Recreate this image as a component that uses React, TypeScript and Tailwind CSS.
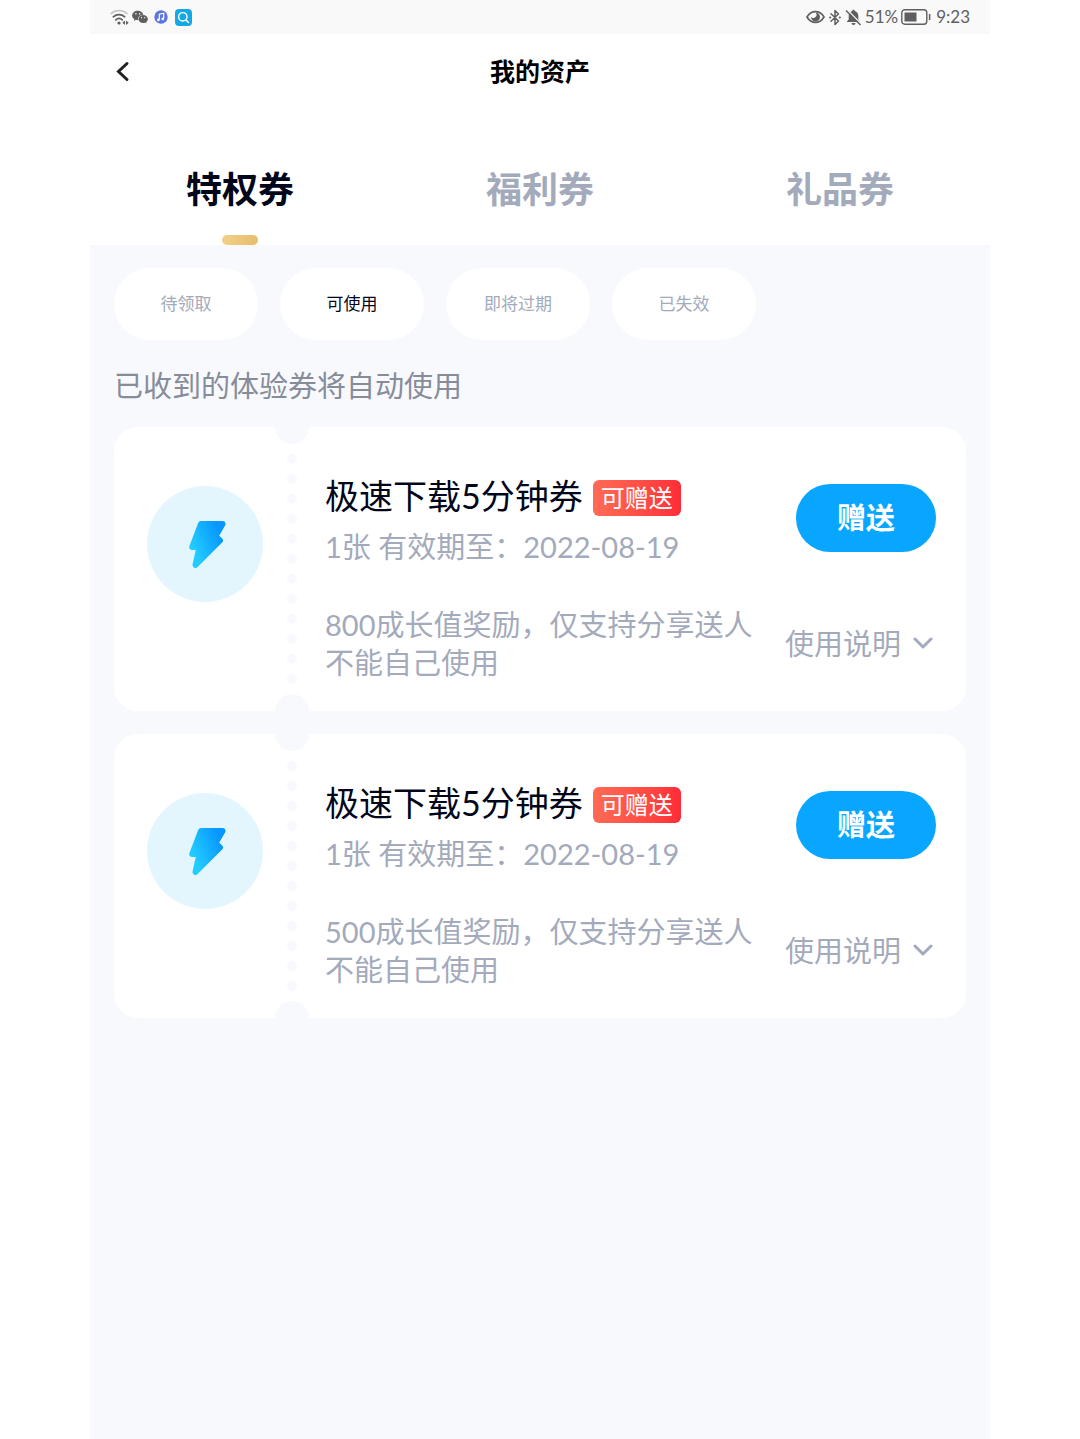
import React, { useState } from 'react';
import { AiFillWechat } from 'react-icons/ai';

interface Coupon {
  id: number;
  name: string;
  count: number;
  expires: string;
  desc: string;
}

const TABS = ['特权券', '福利券', '礼品券'];
const FILTERS = ['待领取', '可使用', '即将过期', '已失效'];
const DOTS = Array.from({ length: 12 }, (_, i) => i);

const COUPONS: Coupon[] = [
  {
    id: 1,
    name: '极速下载5分钟券',
    count: 1,
    expires: '2022-08-19',
    desc: '800成长值奖励，仅支持分享送人不能自己使用',
  },
  {
    id: 2,
    name: '极速下载5分钟券',
    count: 1,
    expires: '2022-08-19',
    desc: '500成长值奖励，仅支持分享送人不能自己使用',
  },
];

function StatusBar() {
  return (
    <div className="h-[34px] bg-[#f9f9f9] px-5 flex items-center justify-between text-[#5f5f5f]">
      <div className="flex items-center gap-0.5">
        <svg className="w-[19px] h-[17px]" viewBox="0 0 19 17" fill="none" strokeLinecap="round">
          <path d="M1 4.6C5.5 .6 12.5 .6 17 4.6" stroke="#c4c4c4" strokeWidth="1.5" />
          <path d="M3.3 7.8C6.6 4.8 11.4 4.8 14.7 7.8" stroke="#5f5f5f" strokeWidth="1.7" />
          <path d="M5.8 10.9C7.7 9.2 10.3 9.2 12.2 10.9" stroke="#5f5f5f" strokeWidth="1.7" />
          <circle cx="9" cy="14" r="1.6" fill="#5f5f5f" />
          <path d="M15 11.5L12.3 13.8L15 16ZM16 11.5L18.7 13.8L16 16Z" fill="#5f5f5f" />
        </svg>
        <AiFillWechat className="w-[18px] h-[18px]" />
        <svg className="w-[22px] h-4" viewBox="0 0 22 16">
          <circle cx="10" cy="8" r="6.7" fill="#5b74e0" />
          <path d="M8.300 10.800V5.200L12.700 4.200V9.800" fill="none" stroke="#fff" strokeWidth="1.2" />
          <circle cx="7.3" cy="10.9" r="1.3" fill="#fff" />
          <circle cx="11.7" cy="9.9" r="1.3" fill="#fff" />
        </svg>
        <svg className="w-[17px] h-[17px]" viewBox="0 0 17 17">
          <rect width="17" height="17" rx="4" fill="#14a9e6" />
          <circle cx="7.8" cy="7.8" r="4.2" fill="none" stroke="#fff" strokeWidth="1.4" />
          <path d="M11 11L13.500 13.500" stroke="#fff" strokeWidth="1.6" strokeLinecap="round" />
        </svg>
      </div>
      <div className="flex items-center gap-[3px] text-[17px] leading-6">
        <svg className="w-[19px] h-[14px]" viewBox="0 0 19 14">
          <path
            d="M1 7C5 -.2 14 -.2 18 7C14 14.200 5 14.200 1 7Z"
            fill="none"
            stroke="currentColor"
            strokeWidth="1.6"
          />
          <path d="M9.500 2.500A4.500 4.500 0 1 1 5 7A2.800 2.800 0 0 0 9.500 2.500Z" fill="currentColor" />
        </svg>
        <svg className="w-[14px] h-[17px]" viewBox="0 0 14 17" fill="none">
          <path
            d="M3 4.800L10.500 12L7 15.500V1.500L10.500 5L3 12.200"
            stroke="currentColor"
            strokeWidth="1.5"
            strokeLinecap="round"
            strokeLinejoin="round"
          />
          <circle cx="2.2" cy="8.500" r="1.1" fill="currentColor" />
          <circle cx="11.800" cy="8.500" r="1.1" fill="currentColor" />
        </svg>
        <svg className="w-[17px] h-[17px]" viewBox="0 0 17 17">
          <path
            d="M8.500 .8C9.300 .8 9.700 1.300 9.700 2C12 2.600 13.300 4.500 13.300 7V10.500L15 13H2V12.500L3.700 10.500V7C3.700 4.500 5 2.600 7.300 2C7.300 1.300 7.700 .8 8.500 .8Z"
            fill="currentColor"
          />
          <path d="M6.500 14H10.500A2 2 0 0 1 6.500 14Z" fill="currentColor" />
          <path d="M2.200 .8L16.500 15.300" stroke="#f9f9f9" strokeWidth="1.3" />
          <path d="M1 1.500L15.500 16" stroke="currentColor" strokeWidth="1.4" />
        </svg>
        <span>51%</span>
        <svg className="w-[30px] h-4" viewBox="0 0 30 16">
          <rect x=".8" y=".8" width="25" height="14.4" rx="3" fill="none" stroke="currentColor" strokeWidth="1.4" />
          <rect x="3.5" y="3.5" width="12" height="9" fill="currentColor" />
          <path d="M28.600 5V11" stroke="currentColor" strokeWidth="1.5" />
        </svg>
        <span className="ml-0.5">9:23</span>
      </div>
    </div>
  );
}

function BoltIcon() {
  return (
    <svg className="w-[42px] h-12" viewBox="0 0 42 48">
      <defs>
        <linearGradient id="bolt" gradientUnits="userSpaceOnUse" x1="8" y1="26" x2="37" y2="14">
          <stop offset="0" stopColor="#22ccff" />
          <stop offset="1" stopColor="#0797ff" />
        </linearGradient>
      </defs>
      <path
        d="M17 4H38.500L31.500 16L36 20.500L11.500 45L15.500 27H8.200Z"
        fill="url(#bolt)"
        stroke="url(#bolt)"
        strokeWidth="6"
        strokeLinejoin="round"
      />
    </svg>
  );
}

function CouponCard({ coupon }: { coupon: Coupon }) {
  return (
    <li className="bg-white rounded-3xl flex">
      <div className="w-[161px] shrink-0 pl-[33px] pt-[59px]">
        <div className="w-[116px] h-[116px] rounded-full bg-[#e3f6fe] flex items-center justify-center">
          <BoltIcon />
        </div>
      </div>

      {/* tear line between the icon and the details */}
      <div className="w-[34px] shrink-0 flex flex-col items-center justify-between">
        <div className="w-full h-[17px] rounded-b-full bg-[#f8f9fd]" />
        {DOTS.map(dot => (
          <div key={dot} className="w-[10px] h-[10px] rounded-full bg-[#f8f9fd]" />
        ))}
        <div className="w-full h-[17px] rounded-t-full bg-[#f8f9fd]" />
      </div>

      <div className="flex-1 min-w-0 pl-4 pr-4 pt-[49px] pb-[29px]">
        <div className="flex items-end gap-2.5">
          <h2 className="text-[34px] leading-10 text-[#02061a] whitespace-nowrap">{coupon.name}</h2>
          <span className="h-9 px-2 rounded-md bg-linear-to-r from-[#ff6a55] to-[#ff2b38] text-white text-[24px] leading-9 whitespace-nowrap">
            可赠送
          </span>
        </div>
        <p className="mt-3 text-[29px] leading-[38px] text-[#a3aabb] whitespace-nowrap">
          {coupon.count}张 有效期至：{coupon.expires}
        </p>
        <p className="mt-10 text-[29px] leading-[38px] text-[#a3aabb]">{coupon.desc}</p>
      </div>

      <div className="shrink-0 pt-[57px] pr-[30px] flex flex-col items-end">
        <button className="w-[140px] h-[68px] rounded-full bg-[#08a6ff] text-white text-[29px] font-bold">赠送</button>
        <button className="mt-[73px] flex items-center gap-3 text-[29px] leading-[38px] text-[#a3aabb]">
          使用说明
          <svg className="w-[23px] h-5" viewBox="0 0 23 20" fill="none">
            <path
              d="M2 5L10 13L18 5"
              stroke="currentColor"
              strokeWidth="3"
              strokeLinecap="round"
              strokeLinejoin="round"
            />
          </svg>
        </button>
      </div>
    </li>
  );
}

export default function App() {
  const [tab, setTab] = useState(0);
  const [filter, setFilter] = useState(1);

  return (
    <div className="min-h-screen bg-white font-['Lato','Noto_Sans_CJK_SC',sans-serif]">
      <div className="w-5/6 mx-auto min-h-screen flex flex-col">
        <StatusBar />

        <header className="h-[74px] px-5 flex items-center justify-between">
          <button aria-label="返回" className="w-10 h-10 flex items-center">
            <svg className="w-6 h-6" viewBox="0 0 24 24" fill="none">
              <path d="M17 4.500L8.500 12.500L17 20.500" stroke="#222" strokeWidth="3" strokeLinecap="round" />
            </svg>
          </button>
          <h1 className="text-[25px] leading-9 font-bold text-black">我的资产</h1>
          <div className="w-10" />
        </header>

        <nav className="h-[137px] pt-[54px] grid grid-cols-3">
          {TABS.map((name, i) => (
            <button
              key={name}
              onClick={() => setTab(i)}
              className={`flex flex-col items-center justify-between text-[36px] leading-[54px] font-bold ${
                tab === i ? 'text-[#02061a]' : 'text-[#a3aabb]'
              }`}
            >
              {name}
              {tab === i && <span className="w-9 h-[10px] rounded-full bg-linear-to-r from-[#f2d08a] to-[#e6bd6a]" />}
            </button>
          ))}
        </nav>

        <main className="flex-1 bg-[#f8f9fd] px-6 pt-[23px] pb-6">
          <div className="flex gap-[22px]">
            {FILTERS.map((name, i) => (
              <button
                key={name}
                onClick={() => setFilter(i)}
                className={`w-36 h-[72px] rounded-full bg-white text-[17px] ${
                  filter === i ? 'text-[#02061a]' : 'text-[#a3aabb]'
                }`}
              >
                {name}
              </button>
            ))}
          </div>

          <p className="mt-[27px] text-[29px] leading-[38px] text-[#868c9a]">已收到的体验券将自动使用</p>

          <ul className="mt-[22px] flex flex-col gap-[23px]">
            {COUPONS.map(coupon => (
              <CouponCard key={coupon.id} coupon={coupon} />
            ))}
          </ul>
        </main>
      </div>
    </div>
  );
}
